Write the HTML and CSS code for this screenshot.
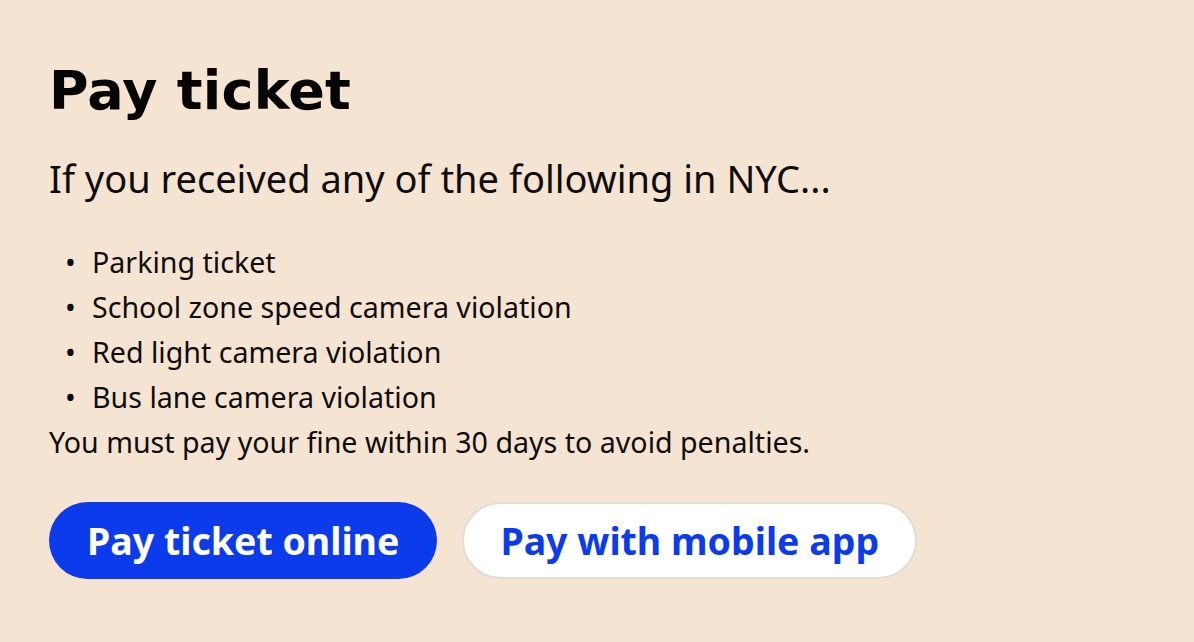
FILE: index.html
```html
<!DOCTYPE html>
<html>
<head>
    <meta charset="UTF-8">
    <title>Pay ticket</title>
    <link rel="stylesheet" href="styles.css">
</head>
<body>
    <section class="pay-card">
        <h1>Pay ticket</h1>
        <p class="lead">If you received any of the following in NYC...</p>
        <ul class="violations">
            <li>Parking ticket</li>
            <li>School zone speed camera violation</li>
            <li>Red light camera violation</li>
            <li>Bus lane camera violation</li>
        </ul>
        <p class="note">You must pay your fine within 30 days to avoid penalties.</p>
        <div class="actions">
            <a class="btn btn-primary" href="#">Pay ticket online</a>
            <a class="btn btn-secondary" href="#">Pay with mobile app</a>
        </div>
    </section>
</body>
</html>
```

FILE: styles.css
```css
body {
    margin: 0;
    background-color: #F6E4D3;
    font-family: "Noto Sans", "Open Sans", sans-serif;
    color: #0D0D0D;
}
.pay-card {
    padding: 58px 50px 0 49px;
}
h1 {
    font-family: "DejaVu Sans", sans-serif;
    font-weight: bold;
    font-size: 54px;
    letter-spacing: 0.2px;
    line-height: 66px;
    margin: 0;
    color: #050505;
}
.lead {
    font-size: 38px;
    line-height: 50px;
    margin: 29px 0 0 0;
}
.violations {
    list-style: none;
    font-size: 28.6px;
    line-height: 45px;
    margin: 36px 0 0 0;
    padding-left: 16px;
}
.violations li {
    display: flex;
}
.violations li::before {
    content: "\2022";
    width: 27px;
    flex-shrink: 0;
}
.note {
    font-size: 28.6px;
    line-height: 45px;
    margin: 0;
}
.actions {
    display: flex;
    gap: 25px;
    margin-top: 38px;
}
.btn {
    display: inline-flex;
    align-items: center;
    justify-content: center;
    box-sizing: border-box;
    height: 77px;
    padding: 0 38px;
    border-radius: 40px;
    font-size: 37.5px;
    font-weight: bold;
    text-decoration: none;
}
.btn-primary {
    background-color: #0C3BEB;
    color: #FFFFFF;
}
.btn-secondary {
    background-color: #FFFFFF;
    color: #0C3BEB;
    border: 2px solid #E2DCD6;
    padding: 0 36px;
}
```
